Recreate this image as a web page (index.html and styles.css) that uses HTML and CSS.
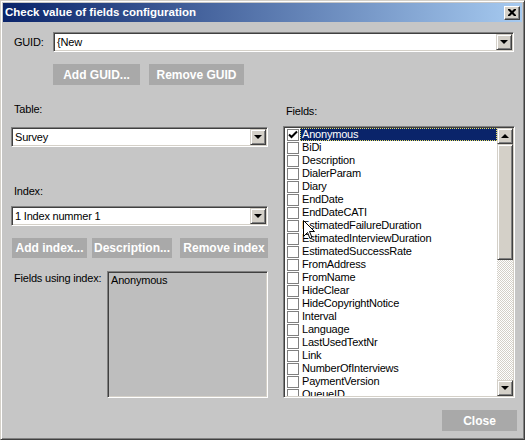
FILE: index.html
```html
<!DOCTYPE html>
<html>
<head>
<meta charset="utf-8">
<link rel="stylesheet" href="styles.css">
</head>
<body>
<div class="window">
  <div class="titlebar">
    <span class="title">Check value of fields configuration</span>
    <div class="tb-close"><svg width="8" height="7" viewBox="0 0 8 7"><path d="M0 0h2l2 2 2-2h2v1l-2.5 2.5L8 6v1H6L4 5 2 7H0V6l2.5-2.5L0 1z" fill="#000"/></svg></div>
  </div>
  <div class="body">
    <div class="guid-row">
      <span class="lbl guid-lbl">GUID:</span>
      <div class="combo guid-combo"><span class="combo-text">{New</span><span class="raised combo-btn"><i class="arr-down"></i></span></div>
    </div>
    <div class="guid-buttons">
      <div class="btn btn-addguid">Add GUID...</div>
      <div class="btn btn-remguid">Remove GUID</div>
    </div>
    <div class="columns">
      <div class="left">
        <div class="lbl lbl-table">Table:</div>
        <div class="combo combo-table"><span class="combo-text">Survey</span><span class="raised combo-btn"><i class="arr-down"></i></span></div>
        <div class="lbl lbl-index">Index:</div>
        <div class="combo combo-index"><span class="combo-text">1 Index nummer 1</span><span class="raised combo-btn"><i class="arr-down"></i></span></div>
        <div class="index-buttons">
          <div class="btn btn-addindex">Add index...</div>
          <div class="btn btn-desc">Description...</div>
          <div class="btn btn-remindex">Remove index</div>
        </div>
        <div class="using-row">
          <span class="lbl using-lbl">Fields using index:</span>
          <div class="using-box"><div class="using-item">Anonymous</div></div>
        </div>
      </div>
      <div class="right">
        <div class="lbl lbl-fields">Fields:</div>
        <div class="listbox">
          <div class="items">
            <div class="row"><span class="chk"><svg width="10" height="10" viewBox="0 0 10 10"><path d="M1 4.5l2.5 2.5L9 1.5" stroke="#000" stroke-width="2" fill="none"/></svg></span><span class="txt sel">Anonymous</span></div>
            <div class="row"><span class="chk"></span><span class="txt">BiDi</span></div>
            <div class="row"><span class="chk"></span><span class="txt">Description</span></div>
            <div class="row"><span class="chk"></span><span class="txt">DialerParam</span></div>
            <div class="row"><span class="chk"></span><span class="txt">Diary</span></div>
            <div class="row"><span class="chk"></span><span class="txt">EndDate</span></div>
            <div class="row"><span class="chk"></span><span class="txt">EndDateCATI</span></div>
            <div class="row"><span class="chk"></span><span class="txt">EstimatedFailureDuration</span></div>
            <div class="row"><span class="chk"></span><span class="txt">EstimatedInterviewDuration</span></div>
            <div class="row"><span class="chk"></span><span class="txt">EstimatedSuccessRate</span></div>
            <div class="row"><span class="chk"></span><span class="txt">FromAddress</span></div>
            <div class="row"><span class="chk"></span><span class="txt">FromName</span></div>
            <div class="row"><span class="chk"></span><span class="txt">HideClear</span></div>
            <div class="row"><span class="chk"></span><span class="txt">HideCopyrightNotice</span></div>
            <div class="row"><span class="chk"></span><span class="txt">Interval</span></div>
            <div class="row"><span class="chk"></span><span class="txt">Language</span></div>
            <div class="row"><span class="chk"></span><span class="txt">LastUsedTextNr</span></div>
            <div class="row"><span class="chk"></span><span class="txt">Link</span></div>
            <div class="row"><span class="chk"></span><span class="txt">NumberOfInterviews</span></div>
            <div class="row"><span class="chk"></span><span class="txt">PaymentVersion</span></div>
            <div class="row"><span class="chk"></span><span class="txt">QueueID</span></div>
          </div>
          <div class="scrollbar">
            <div class="raised sb-btn"><i class="arr-up"></i></div>
            <div class="raised sb-thumb"></div>
            <div class="sb-track"></div>
            <div class="raised sb-btn"><i class="arr-down"></i></div>
          </div>
        </div>
        <div class="btn btn-close">Close</div>
      </div>
    </div>
  </div>
  <svg class="cursor" width="12" height="20" viewBox="0 0 12 20"><path d="M0.5 0.5V16.5L4.5 12.5L7 18.5L9 17.5L6.5 11.5H11.5Z" fill="#fff" stroke="#000" stroke-width="1"/></svg>
</div>
</body>
</html>
```
FILE: styles.css
```css
* { box-sizing: border-box; }
html, body { margin: 0; padding: 0; }
body {
  width: 525px;
  height: 440px;
  overflow: hidden;
  background: #c6c6c6;
  font-family: "Liberation Sans", Arial, sans-serif;
  font-size: 11px;
  color: #000;
}
.window {
  position: relative;
  width: 525px;
  height: 440px;
  background: #c6c6c6;
  border: 1px solid;
  border-color: #d4d0c8 #404040 #404040 #d4d0c8;
  box-shadow: inset 1px 1px #fff, inset -1px -1px #808080;
  padding: 2px 2px 2px 2px;
  display: flex;
  flex-direction: column;
}
.titlebar {
  height: 19px;
  flex: none;
  background: linear-gradient(to right, #0a246a, #a6caf0);
  display: flex;
  align-items: center;
  justify-content: space-between;
  padding-left: 2px;
  padding-right: 2px;
}
.title {
  color: #fff;
  font-weight: bold;
  font-size: 11.5px;
  line-height: 19px;
}
.tb-close {
  width: 16px;
  height: 14px;
  background: #d4d0c8;
  border: 1px solid;
  border-color: #fff #404040 #404040 #fff;
  box-shadow: inset -1px -1px #808080;
  display: flex;
  align-items: center;
  justify-content: center;
}
.body {
  flex: 1;
  padding: 10px 8px 0 8px;
  display: flex;
  flex-direction: column;
}
.lbl {
  line-height: 13px;
  letter-spacing: -0.2px;
  white-space: nowrap;
}
.guid-row {
  display: flex;
  align-items: center;
  height: 20px;
}
.guid-lbl {
  width: 42px;
  padding-left: 3px;
  flex: none;
}
.combo {
  height: 20px;
  background: #fff;
  border: 1px solid;
  border-color: #808080 #fff #fff #808080;
  box-shadow: inset 1px 1px #404040, inset -1px -1px #d4d0c8;
  display: flex;
  align-items: center;
  padding: 1px 1px 1px 2px;
}
.guid-combo { flex: 1; }
.combo-text {
  flex: 1;
  line-height: 13px;
  letter-spacing: -0.2px;
  padding-left: 1px;
  white-space: nowrap;
}
.raised {
  background: #d4d0c8;
  border: 1px solid;
  border-color: #d4d0c8 #404040 #404040 #d4d0c8;
  box-shadow: inset 1px 1px #fff, inset -1px -1px #808080;
  display: flex;
  align-items: center;
  justify-content: center;
}
.combo-btn {
  width: 16px;
  height: 16px;
  flex: none;
}
.arr-down {
  display: block;
  width: 0;
  height: 0;
  border-left: 4px solid transparent;
  border-right: 4px solid transparent;
  border-top: 4px solid #000;
}
.arr-up {
  display: block;
  width: 0;
  height: 0;
  border-left: 4px solid transparent;
  border-right: 4px solid transparent;
  border-bottom: 4px solid #000;
}
.btn {
  background: #a9a9a9;
  color: #fff;
  font-weight: bold;
  font-size: 12px;
  display: flex;
  align-items: center;
  justify-content: center;
  white-space: nowrap;
}
.guid-buttons {
  display: flex;
  gap: 9px;
  margin-top: 12px;
  margin-left: 42px;
  height: 21px;
}
.btn-addguid { width: 87px; }
.btn-remguid { width: 95px; }
.columns {
  display: flex;
  gap: 15px;
  margin-right: -1px;
  flex: 1;
}
.left {
  width: 257px;
  display: flex;
  flex-direction: column;
}
.right {
  flex: 1;
  display: flex;
  flex-direction: column;
}
.lbl-table { margin-top: 18px; padding-left: 3px; }
.combo-table { margin-top: 11px; }
.lbl-index { margin-top: 38px; padding-left: 3px; }
.combo-index { margin-top: 8px; }
.index-buttons {
  display: flex;
  margin-top: 12px;
  margin-left: 1px;
  height: 20px;
}
.btn-addindex { width: 75px; }
.btn-desc { width: 80px; margin-left: 5px; }
.btn-remindex { width: 88px; margin-left: 8px; }
.using-row {
  display: flex;
  margin-top: 13px;
  height: 127px;
}
.using-lbl {
  width: 96px;
  flex: none;
  padding-left: 3px;
  padding-top: 1px;
}
.using-box {
  flex: 1;
  background: #bebebe;
  border: 1px solid;
  border-color: #808080 #fff #fff #808080;
  box-shadow: inset 1px 1px #404040, inset -1px -1px #d4d0c8;
  padding: 2px 3px;
}
.using-item {
  line-height: 13px;
  letter-spacing: -0.2px;
}
.lbl-fields { margin-top: 20px; padding-left: 3px; }
.listbox {
  margin-top: 8px;
  height: 272px;
  background: #fff;
  border: 1px solid;
  border-color: #808080 #fff #fff #808080;
  box-shadow: inset 1px 1px #404040, inset -1px -1px #d4d0c8;
  padding: 1px;
  display: flex;
}
.items {
  flex: 1;
  overflow: hidden;
}
.row {
  display: flex;
  height: 13px;
  align-items: center;
}
.chk {
  width: 12px;
  height: 12px;
  margin-left: 2px;
  margin-right: 1px;
  border: 1px solid #808080;
  background: #fff;
  flex: none;
  display: flex;
  align-items: center;
  justify-content: center;
}
.txt {
  flex: 1;
  height: 13px;
  line-height: 13px;
  padding-left: 2px;
  letter-spacing: -0.2px;
  white-space: nowrap;
}
.txt.sel {
  background: #0a246a;
  color: #fff;
  outline: 1px dotted #e8e060;
  outline-offset: -1px;
}
.scrollbar {
  width: 16px;
  flex: none;
  display: flex;
  flex-direction: column;
}
.sb-btn {
  height: 16px;
  flex: none;
}
.sb-thumb {
  height: 116px;
  flex: none;
}
.sb-track {
  flex: 1;
  background: repeating-conic-gradient(#d4d0c8 0 25%, #fff 0 50%) 0 0 / 2px 2px;
}
.btn-close {
  margin-top: 12px;
  width: 75px;
  height: 21px;
  align-self: flex-end;
  margin-right: -2px;
}
.cursor {
  position: absolute;
  left: 302px;
  top: 219px;
}
```
